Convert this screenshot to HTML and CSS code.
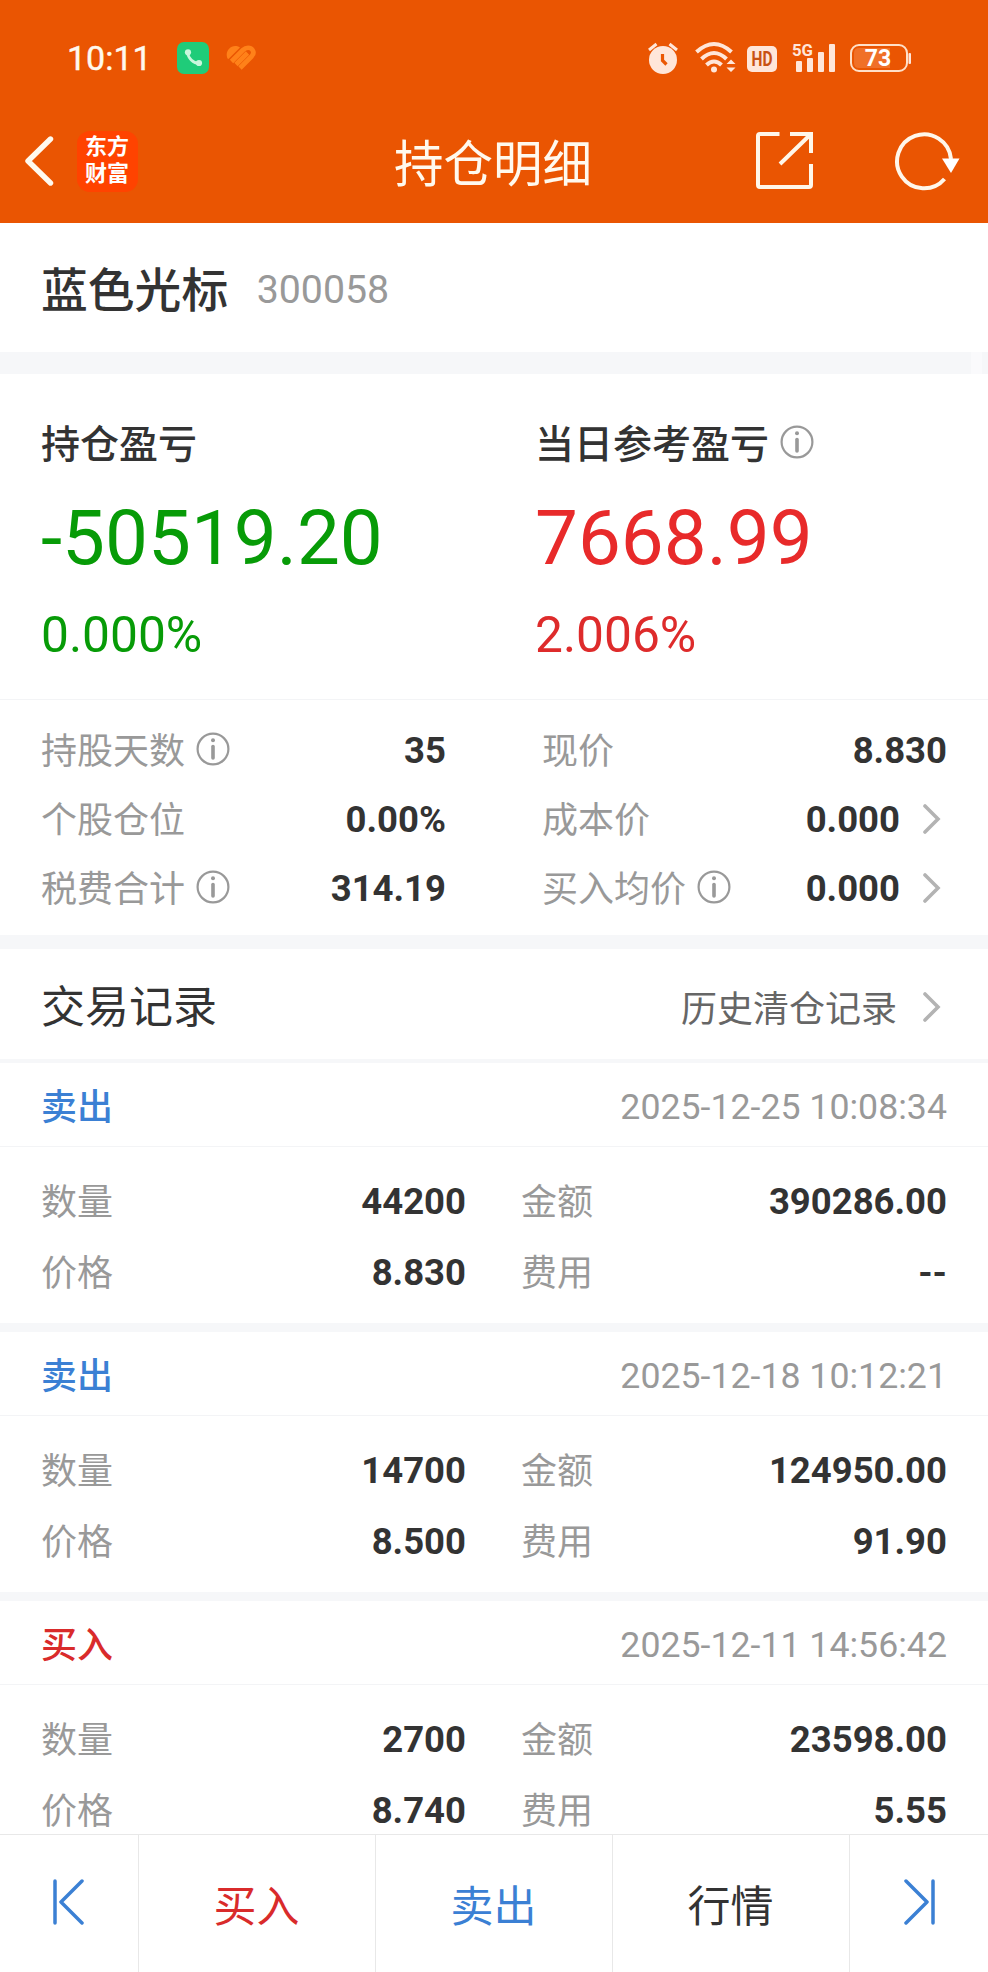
FILE: index.html
```html
<!DOCTYPE html>
<html lang="zh-CN">
<head>
<meta charset="utf-8">
<title>持仓明细</title>
<link rel="stylesheet" href="styles.css">
</head>
<body>
<svg class="defs" width="0" height="0">
  <symbol id="info" viewBox="0 0 34 34"><circle cx="17" cy="17" r="15.4" fill="none" stroke="#999" stroke-width="2.2"/><circle cx="17" cy="8.3" r="2" fill="#999"/><path d="M17 14.5V26" stroke="#999" stroke-width="3.6" stroke-linecap="round"/></symbol>
  <symbol id="more" viewBox="0 0 18 30"><path d="M2 2 15 15 2 28" fill="none" stroke="#b3b3b3" stroke-width="3.6" stroke-linecap="round"/></symbol>
</svg>
<header class="header">
  <div class="status">
    <span class="clock">10:11</span>
    <svg class="phone" width="32" height="32" viewBox="0 0 32 32"><rect width="32" height="32" rx="7" fill="#1fcc79"/><path d="M10.500 10C11 16 16 21.500 22.500 21.500" fill="none" stroke="#c9f7dc" stroke-width="2.800"/><circle cx="11" cy="10.300" r="3.100" fill="#c9f7dc"/><circle cx="22" cy="21" r="3.100" fill="#c9f7dc"/></svg>
    <svg class="heart" width="30" height="26" viewBox="0 0 30 26"><path d="M1.500 13.500C-2 6 6 -2.500 14 2.500L2.500 14z" fill="#ff8119"/><g fill="none" stroke="#ff8119" stroke-width="4.700"><path d="M5.500 16.500 17 5C20 2 24.500 2 26.500 5 28.500 8 27 10 25.500 11.500L14 23"/><path d="M10 19.500 21.500 8"/></g></svg>
    <svg class="sys" width="264" height="38" viewBox="0 -2 264 38">
      <g fill="#ffe6d9">
        <circle cx="15" cy="19" r="14"/><path d="M1 9 8.500 3M21.500 3 29 9" stroke="#ffe6d9" stroke-width="3"/>
        <path d="M14.500 13v6.500l4 4" fill="none" stroke="#eb5703" stroke-width="3.200"/>
        <g fill="none" stroke="#ffe6d9" stroke-width="4"><path d="M48.500 11Q66 -5 83.500 11"/><path d="M53.500 18Q66 6 78.500 18"/><path d="M58.500 24Q66 17 73.500 24"/></g><circle cx="66" cy="28.500" r="3"/>
        <path d="M78.500 23 83 18.500 87.500 23zM78.500 26.500H87.500L83 31z"/>
        <rect x="99" y="5" width="30" height="26" rx="5"/>
        <rect x="148" y="20" width="6" height="11" rx="1"/><rect x="159" y="17" width="6" height="14" rx="1"/><rect x="170" y="11" width="6" height="20" rx="1"/><rect x="181" y="3" width="6" height="28" rx="1"/>
        <rect x="260.500" y="12" width="2.500" height="11" rx="1"/>
      </g>
      <rect x="203" y="4" width="56" height="26" rx="8" fill="none" stroke="#ffe0c8" stroke-width="2"/>
      <path d="M211 7H242V27H211Q206 27 206 22V12Q206 7 211 7" fill="#f07028"/>
      <text class="t-hd" x="114" y="25" textLength="21" lengthAdjust="spacingAndGlyphs">HD</text>
      <text class="t-5g" x="144" y="15" textLength="21" lengthAdjust="spacingAndGlyphs">5G</text>
      <text class="t-bat" x="230" y="25.300">73</text>
    </svg>
  </div>
  <div class="nav">
    <svg class="back" width="30" height="50" viewBox="0 0 30 50"><path d="M26.500 3 4 25 26.500 47" fill="none" stroke="#fff9ee" stroke-width="5.400" stroke-linecap="round" stroke-linejoin="round"/></svg>
    <div class="logo"><span>东方</span><span>财富</span></div>
    <h1 class="title">持仓明细</h1>
    <svg class="share" width="60" height="60" viewBox="0 0 60 60"><path d="M24.500 3H5Q3 3 3 5V54Q3 56 5 56H54Q56 56 56 54V33M35 3H56V22M56 3 25 33" fill="none" stroke="#fff7ea" stroke-width="4"/></svg>
    <svg class="reload" width="66" height="60" viewBox="0 0 66 60"><path d="M50.500 48A27 27 0 1 1 57 28" fill="none" stroke="#fff7ea" stroke-width="4"/><path d="M48 27.500H65.500L57 42z" fill="#fff"/></svg>
  </div>
</header>
<section class="stock"><h2>蓝色光标</h2><span class="code">300058</span></section>
<div class="band"><i></i></div>
<section class="pnl">
  <div class="down"><h3>持仓盈亏</h3><strong>-50519.20</strong><em>0.000%</em></div>
  <div class="up"><h3>当日参考盈亏<svg class="info"><use href="#info"/></svg></h3><strong>7668.99</strong><em>2.006%</em></div>
</section>
<section class="stats">
  <div class="stat"><span>持股天数<svg class="info"><use href="#info"/></svg></span><b>35</b></div>
  <div class="stat"><span>现价</span><b>8.830</b></div>
  <div class="stat"><span>个股仓位</span><b>0.00%</b></div>
  <div class="stat"><span>成本价</span><b>0.000<svg class="more"><use href="#more"/></svg></b></div>
  <div class="stat"><span>税费合计<svg class="info"><use href="#info"/></svg></span><b>314.19</b></div>
  <div class="stat"><span>买入均价<svg class="info"><use href="#info"/></svg></span><b>0.000<svg class="more"><use href="#more"/></svg></b></div>
</section>
<section class="records-head"><h2>交易记录</h2><a><span>历史清仓记录</span><svg class="more"><use href="#more"/></svg></a></section>
<main class="records">
  <article class="record">
    <div class="record-top"><span class="sell">卖出</span><time>2025-12-25 10:08:34</time></div>
    <div class="record-body"><span>数量</span><b>44200</b><span>金额</span><b>390286.00</b><span>价格</span><b>8.830</b><span>费用</span><b>--</b></div>
  </article>
  <article class="record">
    <div class="record-top"><span class="sell">卖出</span><time>2025-12-18 10:12:21</time></div>
    <div class="record-body"><span>数量</span><b>14700</b><span>金额</span><b>124950.00</b><span>价格</span><b>8.500</b><span>费用</span><b>91.90</b></div>
  </article>
  <article class="record">
    <div class="record-top"><span class="buy">买入</span><time>2025-12-11 14:56:42</time></div>
    <div class="record-body"><span>数量</span><b>2700</b><span>金额</span><b>23598.00</b><span>价格</span><b>8.740</b><span>费用</span><b>5.55</b></div>
  </article>
</main>
<footer class="toolbar">
  <div class="step"><svg width="32" height="46" viewBox="0 0 32 46"><path d="M3 2V44M30 2 9 23 30 44" fill="none" stroke="#3b80d4" stroke-width="3.500" stroke-linecap="round" stroke-linejoin="round"/></svg></div>
  <div class="buy">买入</div><div class="sell">卖出</div><div>行情</div>
  <div class="step"><svg width="32" height="46" viewBox="0 0 32 46"><path d="M29 2V44M2 2 23 23 2 44" fill="none" stroke="#3b80d4" stroke-width="3.500" stroke-linecap="round" stroke-linejoin="round"/></svg></div>
</footer>
</body>
</html>
```
FILE: styles.css
```css
* { box-sizing: border-box; margin: 0; padding: 0; }
body {
  display: flex; flex-direction: column;
  width: 988px; height: 1972px; overflow: hidden;
  background: #fff; color: #333;
  font-family: Roboto, "Noto Sans CJK SC", sans-serif;
  font-size: 36px; line-height: 48px;
}
h1, h2, h3, em { font-weight: 400; font-style: normal; }
svg { display: block; flex: none; }
.defs { position: absolute; }
.header { flex: none; height: 223px; background: #ea5502; color: #fff9ee; }
.status { display: flex; align-items: center; height: 102px; padding: 14px 0 0 67px; }
.clock { width: 110px; font-size: 34px; font-weight: 400; -webkit-text-stroke: .4px; }
.phone { margin-right: 17px; }
.sys { margin: 0 76px 0 auto; }
.t-hd { font-size: 20px; font-weight: 700; text-anchor: middle; fill: #c95213; }
.t-5g { font-size: 17px; font-weight: 700; fill: #ffe6d9; }
.t-bat { font-size: 23px; font-weight: 700; text-anchor: middle; fill: #fff; }
.nav { display: flex; align-items: center; height: 118px; padding-left: 24px; }
.logo {
  display: grid; align-content: center; justify-content: center;
  width: 61px; height: 61px; margin-left: 23px; padding: 0 1px 3px 0; border-radius: 13px;
  background: #ff4300; color: #fff; font-size: 22px; line-height: 27px; font-weight: 700;
}
.title { width: 200px; margin: 8px 0 0 256px; font-size: 49.500px; white-space: nowrap; }
.share { margin: -1px 0 0 161px; }
.reload { margin-left: 79px; }
.stock { display: flex; align-items: center; flex: none; height: 129px; padding: 6px 0 0 41px; }
.stock h2 { font-size: 46.800px; font-weight: 500; }
.code { margin: -1px 0 0 28.500px; color: #999; font-size: 39.300px; }
.band { flex: none; height: 22px; padding-left: 971px; background: #f6f7f9; }
.band i { display: block; width: 11px; height: 22px; background: #fafafc; }
.pnl { display: grid; grid-template-columns: 494px 1fr; flex: none; height: 326px; padding: 47px 0 0 41px; border-bottom: 1px solid #f3f4f6; }
.pnl h3 { display: flex; align-items: center; font-size: 39px; font-weight: 500; }
.pnl strong { display: block; margin-top: 24px; font-size: 76.400px; line-height: 90px; font-weight: 400; }
.pnl em { display: block; margin-top: 27px; font-size: 49.700px; line-height: 50px; }
.down strong, .down em { color: #079b07; }
.up strong { color: #e82a2a; }
.up em { color: #de2b2b; }
.info { width: 34px; height: 34px; margin: -6px 0 0 11px; }
.more { width: 18px; height: 30px; margin: -2px 6px 0 23px; }
.stats { display: grid; grid-template-columns: 405px 405px; grid-auto-rows: 69px; column-gap: 96px; flex: none; height: 249px; padding: 16px 41px 0; border-bottom: 14px solid #f6f7f9; }
.stat, .stat span, .stat b { display: flex; align-items: center; }
.stat { justify-content: space-between; color: #999; }
.stat span { padding-top: 2px; }
b { color: #333; font-size: 36.500px; font-weight: 700; }
.records-head { display: flex; align-items: center; justify-content: space-between; flex: none; height: 114px; padding: 7px 41px 0; border-bottom: 4px solid #f6f7f9; }
.records-head h2 { font-size: 44px; }
.records-head a { display: flex; align-items: center; color: #666; }
.records-head a span { padding-top: 5px; margin-right: 3px; }
.records { flex: 1; min-height: 0; overflow: hidden; }
.record { height: 269px; border-bottom: 9px solid #f6f7f9; }
.record-top { display: flex; align-items: center; justify-content: space-between; height: 84px; padding: 5px 41px 0; border-bottom: 1px solid #f3f4f6; }
.record-top span { padding-top: 2px; font-weight: 500; }
.record-top time { color: #999; font-size: 35.700px; }
.record-body { display: grid; grid-template-columns: 100px 325px 155px 326px; grid-auto-rows: 71px; align-items: center; padding: 19px 41px 0; color: #999; }
.record-body span { padding-top: 2px; }
.record-body span:nth-of-type(even) { padding-left: 55px; }
.record-body b { text-align: right; }
.sell { color: #3b80d4; }
.buy { color: #d92b2b; }
.toolbar { display: grid; grid-template-columns: 139px repeat(3, 237px) 1fr; flex: none; height: 138px; border-top: 1px solid #e8e8e8; font-size: 43px; }
.toolbar div { display: flex; align-items: center; justify-content: center; border-right: 1px solid #e8e8e8; padding: 7px 1px 0 0; }
.toolbar .step { padding: 0 2px 4px 0; }
.toolbar .step:last-child { padding: 0 0 4px 1px; border: 0; }
```
